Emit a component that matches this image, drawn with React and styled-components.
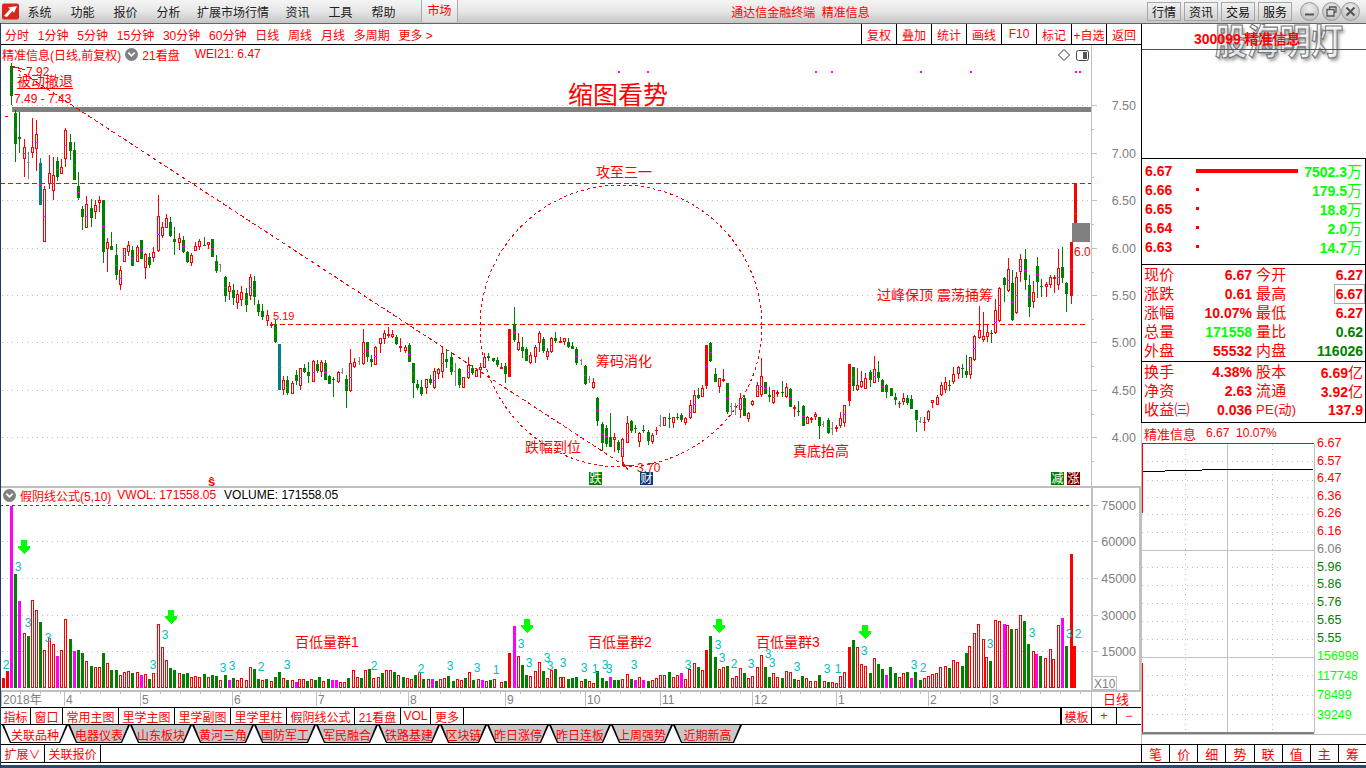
import React from 'react';
import styled, { createGlobalStyle } from 'styled-components';

const Global = createGlobalStyle`
  html, body { margin: 0; padding: 0; background: #fff; overflow: hidden; }
  * { box-sizing: border-box; }
`;
const FONT = `"Liberation Sans", "Noto Sans CJK SC", sans-serif`;
const RED = '#ff0000', GREEN = '#008000', LIME = '#00ff00', GRAY = '#808080', LINE = '#c0c0c0', MAG = '#ff00ff', TEAL = '#00c0c0';

/* ---------- data ---------- */
// scale, x0, y0, rows [u, bodyTop, bodyBottom, high, low, kind]
const SEGMENTS = [
  [1, 0, 0, [[11.5, 66, 96, 63, 105, 'g']]],
  [3, 0, 130, [
    [46,-51,41,-60,95,'g'],[58,22,27,-54,69,'g'],[73,52,86,27,140,'r'],[85,96,98,65,147,'y'],[97,52,68,-36,85,'r'],[109,12,58,-30,122,'r'],
    [121,100,225,85,225,'t'],[133,178,335,168,335,'r'],[148,130,163,75,177,'r'],[160,135,182,80,210,'r'],[172,94,140,82,152,'g'],[184,112,131,88,131,'r'],
    [196,0,86,-6,110,'r'],[211,36,62,12,90,'g'],[223,60,150,36,150,'g'],[235,168,204,126,210,'g'],[247,237,261,228,300,'g'],[259,222,293,198,293,'r'],
    [274,234,264,207,290,'g'],[286,226,245,210,268,'r'],[298,210,218,198,245,'r'],[310,210,366,210,398,'g'],[322,336,356,324,425,'r'],[334,348,360,306,360,'g'],
    [349,375,435,342,450,'g'],[361,420,465,408,480,'r'],[373,354,395,354,395,'r'],[385,346,365,332,378,'r'],[397,360,407,348,407,'g'],[412,351,395,346,395,'r'],
    [424,330,387,330,387,'g'],[436,372,413,370,447,'r'],[448,380,405,370,415,'g'],[460,366,383,352,395,'r'],[475,259,362,195,365,'r'],[487,291,318,277,325,'r'],
    [499,264,293,252,295,'r'],[511,276,318,261,322,'g'],[523,328,335,290,375,'g'],[538,324,339,308,360,'r'],[550,330,365,318,368,'g'],[562,366,396,362,400,'g'],
    [574,375,398,370,408,'r'],[586,348,362,337,362,'r'],[598,333,351,328,360,'r'],[613,345,347,322,347,'g'],[625,337,346,335,358,'r'],[637,327,380,327,380,'g'],
    [649,393,423,376,428,'g'],[661,403,405,402,425,'y'],
  ]],
  [1, 0, 0, [
    [225,277,296,276,302,'g'],[229,286,292,282,300,'r'],[233,290,298,284,305,'g'],[237,294,303,290,309,'r'],[241,292,300,286,306,'r'],[246,293,305,288,312,'g'],
    [250,277,296,274,300,'r'],[254,281,297,276,305,'g'],[258,304,312,300,316,'g'],[262,311,317,304,320,'g'],[267,315,321,310,326,'r'],
  ]],
  [3, 270, 320, [
    [4,11,14,5,25,'r'],[16,12,65,0,70,'g'],[28,72,210,72,210,'t'],[40,180,210,168,225,'r'],[52,180,218,168,225,'g'],[67,190,222,184,222,'r'],[79,165,183,150,195,'g'],
    [91,145,198,145,210,'r'],[103,145,155,132,160,'g'],[115,157,168,125,190,'g'],[130,123,185,120,185,'r'],[142,132,152,120,160,'g'],[154,125,156,120,170,'r'],
    [166,129,180,120,180,'g'],[178,168,192,165,192,'g'],[190,178,181,170,230,'g'],[205,156,186,152,190,'r'],[217,156,158,145,163,'y'],[229,178,212,165,263,'g'],
    [241,130,214,88,215,'r'],[253,127,140,115,143,'r'],[268,124,126,112,136,'y'],[280,67,133,28,135,'r'],[292,67,112,65,125,'g'],[304,118,126,105,140,'g'],
    [316,80,136,78,136,'r'],[331,55,73,55,100,'r'],[343,40,58,30,72,'r'],[355,42,48,22,55,'r'],[367,42,52,30,55,'r'],[379,52,72,45,75,'g'],[391,77,82,55,95,'r'],
    [406,82,93,75,100,'r'],[418,75,125,70,125,'g'],[430,130,188,128,233,'g'],[442,193,203,180,210,'g'],[454,200,222,180,228,'g'],[469,178,205,176,222,'r'],
    [481,178,190,165,195,'g'],[493,154,205,143,207,'r'],[505,148,163,145,178,'r'],[517,100,157,85,175,'r'],[529,117,125,88,145,'g'],[544,110,155,95,165,'g'],
    [556,154,156,130,197,'y'],[568,148,195,145,205,'g'],[580,172,205,172,205,'r'],[595,135,175,112,177,'r'],[607,145,158,135,165,'g'],[619,150,172,145,172,'r'],
    [631,142,150,128,175,'r'],[643,112,145,100,145,'r'],[655,109,113,100,122,'g'],[670,115,123,113,125,'g'],[682,120,135,112,140,'g'],[694,140,146,130,148,'r'],
    [706,138,162,130,190,'g'],[718,28,170,28,170,'s'],
  ]],
  [3, 480, 300, [
    [103,73,120,22,125,'g'],[115,127,150,100,153,'r'],[127,140,152,112,175,'g'],[139,147,182,142,184,'g'],[151,165,190,155,192,'r'],[165,140,172,135,190,'r'],
    [178,99,130,93,155,'r'],[190,117,152,110,160,'g'],[202,152,170,145,180,'r'],[214,114,155,112,160,'r'],[226,113,123,96,128,'g'],[241,123,128,112,128,'s'],
    [253,115,125,115,135,'r'],[265,125,140,115,145,'g'],[277,138,146,125,148,'g'],[289,146,190,140,195,'g'],[304,179,181,176,195,'y'],[316,197,253,195,255,'g'],
    [328,237,239,228,250,'y'],[340,247,265,235,266,'r'],[352,295,363,290,378,'g'],[367,372,430,365,452,'g'],[379,385,432,375,440,'g'],[391,410,440,338,440,'g'],
    [403,410,420,400,455,'r'],[415,425,450,420,460,'g'],[427,417,470,415,498,'r'],[442,370,428,347,430,'r'],[454,363,394,360,400,'g'],[466,385,388,375,400,'g'],
    [478,400,425,395,440,'r'],[490,390,394,375,400,'g'],[505,397,423,390,435,'g'],[517,405,425,400,432,'r'],[529,390,393,380,405,'s'],[541,374,376,345,382,'y'],
    [553,352,377,350,378,'r'],[568,354,356,340,385,'g'],[580,352,370,350,385,'r'],[592,351,353,340,360,'g'],[604,345,360,338,365,'g'],[616,355,370,350,375,'r'],
    [631,315,355,300,357,'r'],[643,286,338,270,338,'r'],[655,285,295,265,297,'g'],[667,265,290,255,290,'r'],[679,135,258,135,268,'s'],[691,128,182,125,185,'g'],
    [706,222,245,205,245,'g'],[718,235,262,235,278,'r'],[730,238,243,208,245,'s'],[742,250,335,250,342,'g'],[754,319,321,310,345,'y'],[766,319,321,310,345,'y'],
  ]],
  [3, 740, 240, [
    [0,475,510,458,535,'r'],[13,475,527,465,527,'g'],[25,518,537,515,545,'r'],[37,484,494,480,497,'r'],[52,436,472,425,472,'r'],[64,408,465,354,470,'r'],[76,426,462,425,463,'g'],
    [88,466,470,442,486,'g'],[100,451,490,451,492,'r'],[112,455,461,450,470,'r'],[127,456,458,423,470,'g'],[139,440,470,428,473,'r'],[151,447,500,445,500,'g'],
    [163,502,508,495,530,'r'],[175,512,514,483,527,'g'],[190,498,557,495,558,'g'],[202,530,551,528,553,'r'],[214,534,536,530,548,'r'],[226,523,530,517,540,'r'],
    [238,532,557,530,598,'g'],[250,552,554,543,562,'y'],[265,541,580,533,582,'g'],[277,564,566,545,585,'y'],[289,562,566,555,575,'r'],[301,535,557,515,565,'r'],
    [313,496,548,494,560,'r'],[328,373,484,373,497,'s'],[340,381,437,381,452,'g'],[352,436,450,385,452,'r'],[364,424,441,393,445,'r'],[376,415,447,400,447,'r'],
    [391,395,420,390,440,'g'],[403,388,428,348,430,'r'],[415,396,414,363,425,'g'],[427,420,456,418,456,'g'],[439,435,456,433,473,'g'],[454,445,467,445,467,'g'],
    [466,471,480,460,495,'g'],[478,490,493,483,503,'s'],[490,475,487,460,495,'r'],[502,475,489,465,495,'g'],[514,477,506,465,506,'g'],[529,511,540,510,575,'g'],
    [541,544,546,530,548,'y'],[553,546,549,530,573,'s'],[565,512,540,510,545,'r'],[577,481,490,480,505,'r'],[592,470,494,465,495,'r'],[604,436,465,425,468,'r'],
    [616,425,450,410,458,'r'],[628,435,438,420,452,'g'],[640,403,425,382,432,'r'],[655,380,403,378,418,'r'],[667,383,385,372,415,'g'],[679,393,404,346,415,'g'],
    [691,352,405,350,416,'r'],[703,287,361,285,362,'r'],[718,270,293,198,298,'r'],[730,289,299,217,305,'r'],[742,277,291,255,305,'r'],[754,280,283,270,308,'g'],
    [766,210,280,178,283,'r'],[778,144,242,142,245,'r'],[793,113,134,112,185,'g'],[805,88,154,55,155,'r'],[817,128,240,90,243,'g'],[829,112,220,97,222,'r'],
    [841,57,95,42,125,'r'],[856,57,119,27,150,'g'],[868,135,200,105,230,'g'],[880,157,186,123,205,'r'],[892,78,125,50,175,'g'],[904,137,139,118,170,'g'],
    [919,133,142,125,170,'r'],[931,112,134,105,143,'r'],[943,112,118,105,160,'r'],[955,85,135,28,150,'r'],[967,82,113,22,128,'g'],[979,128,162,125,215,'g'],
    [994,6,167,6,192,'s'],[1007,-171,6,-171,6,'s'],
  ]],
];
const CANDLES = SEGMENTS.flatMap(([s, x0, y0, rows]) =>
  rows.map(([u, t, b, h, l, k]) => ({
    x: Math.round(x0 + u / s - 1.5), t: Math.round(y0 + t / s), b: Math.round(y0 + b / s),
    h: Math.round(y0 + h / s), l: Math.round(y0 + l / s), k,
  })));

const VOL_A = [[10,594,'s'],[22,573,'s'],[34,78,'m'],[46,282,'g'],[58,363,'m'],[73,460,'r'],[85,468,'g'],[97,360,'r'],[109,390,'r'],[121,426,'g'],[133,510,'r'],[148,475,'r'],[160,492,'r'],[172,528,'m'],[184,510,'r'],[196,417,'r'],[211,477,'g'],[223,513,'m'],[235,510,'g'],[247,519,'g'],[259,543,'r'],[274,558,'g'],[286,561,'r'],[298,561,'r'],[310,519,'g'],[322,549,'r'],[334,570,'g'],[349,570,'g'],[361,585,'r'],[373,576,'r'],[385,573,'r'],[397,579,'g'],[412,576,'r'],[424,585,'m'],[436,582,'r'],[448,597,'g'],[460,579,'r'],[475,432,'r'],[487,501,'r'],[499,540,'r'],[511,564,'g'],[523,570,'g'],[538,579,'r'],[550,582,'g'],[562,579,'g'],[574,591,'r'],[586,588,'r'],[598,591,'r'],[613,582,'g'],[625,591,'r'],[637,585,'g'],[649,588,'g'],[661,600,'r'],[676,585,'g'],[688,600,'m'],[700,594,'g'],[712,600,'r'],[724,594,'r'],[739,600,'r'],[751,561,'r'],[763,567,'g'],[775,597,'g'],[787,600,'r'],[799,597,'g'],[814,603,'r'],[826,591,'g'],[838,576,'g'],[850,594,'r'],[862,600,'g'],[877,600,'r'],[889,606,'m'],[898,597,'r']];
const VOL_B = [[9,'r'],[7,'g'],[9,'r'],[8,'g'],[11,'g'],[7,'r'],[9,'g'],[8,'m'],[8,'m'],[6,'r'],[6,'r'],[10,'g'],[18,'r'],[11,'r'],[10,'g'],[18,'r'],[19,'g'],[10,'r'],[11,'r'],[15,'g'],[18,'r'],[18,'r'],[16,'g'],[13,'r'],[11,'g'],[10,'r'],[9,'r'],[13,'g'],[16,'r'],[9,'g'],[9,'r'],[9,'m'],[7,'g'],[9,'r'],[10,'r'],[12,'g'],[7,'g'],[9,'r'],[8,'r'],[10,'g'],[16,'r'],[8,'g'],[9,'r'],[8,'m'],[7,'r'],[8,'g'],[9,'r']];
const VOL_C = [[4,245,'r'],[14,242,'g'],[25,158,'s'],[39,78,'m'],[49,168,'r'],[60,195,'g'],[70,225,'g'],[81,228,'r'],[94,213,'r'],[105,186,'r'],[116,212,'g'],[126,234,'r'],[137,210,'r'],[148,207,'g'],[160,232,'r'],[170,232,'r'],[182,237,'g'],[193,234,'g'],[204,231,'g'],[217,243,'r'],[227,237,'g'],[238,243,'r'],[249,248,'r'],[260,213,'g'],[272,234,'g'],[283,243,'g'],[294,231,'m'],[305,240,'g'],[316,240,'g'],[326,237,'r'],[339,222,'r'],[349,237,'g'],[360,240,'m'],[371,232,'r'],[381,240,'m'],[394,243,'g'],[405,240,'r'],[416,234,'r'],[427,225,'r'],[438,225,'r'],[450,216,'g'],[461,231,'r'],[472,225,'r'],[482,219,'m'],[493,237,'r'],[505,207,'r'],[517,189,'r'],[528,201,'g'],[538,210,'r'],[550,150,'s'],[560,108,'g'],[573,171,'g'],[583,207,'r'],[594,201,'r'],[605,198,'g'],[618,234,'r'],[629,228,'r'],[640,204,'r'],[650,219,'g'],[660,234,'r'],[671,228,'r'],[684,201,'r'],[695,165,'r'],[706,201,'g'],[716,231,'g'],[727,219,'r'],[739,231,'r'],[751,234,'g'],[761,214,'r'],[772,216,'r'],[783,237,'g'],[794,240,'r'],[805,228,'g'],[816,234,'r'],[827,243,'r'],[838,243,'r'],[849,225,'g'],[862,243,'r'],[873,246,'g'],[884,246,'r'],[895,249,'r'],[905,228,'r'],[916,216,'r'],[929,141,'s'],[939,120,'g'],[950,141,'r'],[961,192,'r'],[972,198,'r'],[985,219,'g'],[995,174,'r'],[1006,192,'g'],[1017,207,'g'],[1027,225,'m'],[1040,201,'g'],[1051,219,'g'],[1062,231,'r'],[1073,219,'r'],[1083,216,'g'],[1094,234,'m'],[1106,216,'g'],[1118,240,'g'],[1128,234,'r'],[1139,228,'r'],[1150,222,'r'],[1162,219,'r'],[1173,201,'r'],[1184,198,'r'],[1195,204,'g'],[1205,180,'r'],[1218,186,'r'],[1229,198,'g'],[1240,159,'g'],[1250,138,'r'],[1261,99,'r'],[1274,72,'r'],[1285,117,'r'],[1295,171,'r'],[1306,183,'g'],[1317,60,'r'],[1328,63,'r'],[1341,72,'m'],[1351,75,'r'],[1361,87,'g'],[1373,87,'r'],[1384,45,'r'],[1396,63,'g'],[1407,132,'g'],[1418,153,'r'],[1428,162,'m'],[1439,168,'g'],[1452,174,'r'],[1463,147,'r'],[1473,177,'r'],[1485,75,'r'],[1495,54,'m'],[1506,138,'g'],[1519,-138,'s'],[1529,138,'s']];
const VOLUMES = [
  ...VOL_A.map(([u, v, k]) => ({ x: u / 3, y: 480 + v / 3, k })),
  ...VOL_B.map(([h, k], i) => ({ x: 303 + i * 4.17, y: 688 - h, k })),
  ...VOL_C.map(([u, v, k]) => ({ x: 500 + u / 2.66, y: 600 + v / 3, k })),
].map(b => ({ x: Math.round(b.x - 1.5), y: Math.round(b.y), k: b.k }));

const VOL_NUMS = [['2',6,664],['3',18,566],['3',28,622],['3',48,637],['3',153,664],['3',165,634],['3',223,667],['3',232,665],['2',261,666],['3',287,664],['2',374,665],['2',421,668],['3',450,665],['3',477,667],['1',496,669],['3',521,643],['3',529,662],['3',547,657],['3',550,665],['3',563,662],['3',584,667],['1',595,668],['3',605,664],['3',609,668],['3',634,664],['3',688,664],['3',718,644],['3',722,657],['2',734,663],['3',751,663],['3',768,653],['3',772,662],['3',797,666],['3',827,668],['1',838,668],['3',864,650],['3',914,664],['2',923,667],['3',990,643],['3',1032,632],['3',1069,633],['2',1078,633]];
const ARROWS = [[24,540],[171,610],[527,619],[719,619],[865,625]];
const NOTES = [['缩图看势',568,104,25],['攻至三一',596,177,14],['筹码消化',596,366,14],['跌幅到位',525,452,14],['真底抬高',793,456,14],['过峰保顶 震荡捅筹',877,300,14],['被动撤退',17,86,14],['百低量群1',295,647,14],['百低量群2',588,647,14],['百低量群3',756,647,14],['7.92',26,76,12],['7.49 - 7.43',14,103,12],['5.19',273,320,11],['3.70',637,472,12],['6.0',1074,256,12]];
const PRICE_TICKS = [['7.50',105],['7.00',153],['6.50',200],['6.00',248],['5.50',295],['5.00',342],['4.50',390],['4.00',437]];
const VOL_TICKS = [['75000',505],['60000',541],['45000',578],['30000',615],['15000',651]];
const MONTHS = [['2018年',1,3],['4',64,66],['5',140,142],['6',232,234],['7',316,318],['8',408,410],['9',505,507],['10',585,587],['11',660,662],['12',752,754],['1',836,838],['2',928,930],['3',990,992]];
const DOTS = [618,647,815,831,920,970,1075,1079];
const BADGES = [['跌',589,GREEN],['财',640,'#0a3a6e'],['减',1051,GREEN],['涨',1067,'#7a0000']];

const MINI_PRICES = [['6.67',443,RED],['6.57',461,RED],['6.47',478,RED],['6.36',496,RED],['6.26',513,RED],['6.16',531,RED],['6.06',549,GRAY],['5.96',567,GREEN],['5.86',584,GREEN],['5.76',602,GREEN],['5.65',620,GREEN],['5.55',638,GREEN],['156998',656,LIME],['117748',676,LIME],['78499',695,LIME],['39249',715,LIME]];
const MINI_DOTS = [461,480,497,514,532,567,585,603,621,639,675,695,714];

/* ---------- styled parts ---------- */
const Screen = styled.div`
  position: relative; width: 1366px; height: 768px; background: #fff; overflow: hidden;
  font-family: ${FONT}; color: ${RED}; font-size: 12px; display: flex; flex-direction: column;
  &::before { content: ''; position: absolute; left: 0; top: 23px; bottom: 0; width: 1px; background: #1d3c5e; z-index: 5; }
`;
const TopBar = styled.header`
  height: 24px; flex: none; display: flex; align-items: center; padding: 0 6px 1px 2px;
  background: linear-gradient(#f4f4f4, #e8e8e8 45%, #c6c6c6); border-bottom: 1px solid #666;
`;
const Logo = styled.svg`width: 17px; height: 17px; margin-right: -1px; flex: none;`;
const MenuItem = styled.span`
  color: #222; font-size: 12px; padding: 0 ${p => p.$pad}px; white-space: nowrap; letter-spacing: 0;
`;
const MarketTab = styled.span`
  margin-left: 16px; width: 37px; height: 22px; line-height: 22px; text-align: center; color: ${RED};
  background: linear-gradient(#fafafa, #dcdcdc); border-left: 1px solid #aaa; border-right: 1px solid #aaa;
`;
const AppTitle = styled.span`margin-left: 273px; white-space: pre; font-size: 12px;`;
const TopRight = styled.div`margin-left: auto; display: flex; align-items: center; gap: 3px;`;
const TopButton = styled.button`
  width: 34px; height: 19px; padding: 0; font: 12px ${FONT}; color: #111; border: 1px solid #a8a8a8; border-radius: 0;
  background: linear-gradient(#f2f2f2, #d0d0d0);
`;
const WinButton = styled.span`
  width: 19px; height: 19px; border-radius: 50%; border: 1px solid #999; margin-left: ${p => p.$gap}px;
  background: radial-gradient(circle at 50% 30%, #eee, #b6b6b6); display: flex; align-items: center; justify-content: center;
  svg { width: 11px; height: 11px; }
`;

const Body = styled.div`flex: none; height: 739px; display: flex;`;
const LeftColumn = styled.main`width: 1141px; flex: none; display: flex; flex-direction: column;`;
const ToolBar = styled.nav`
  height: 21px; flex: none; display: flex; align-items: center; border-bottom: 1px solid #000; padding-left: 5px;
`;
const PeriodItem = styled.span`margin-right: 8.8px; white-space: nowrap; font-size: 12px;`;
const ToolRight = styled.div`margin-left: auto; display: flex; height: 100%;`;
const ToolButton = styled.span`
  width: 35px; display: flex; align-items: center; justify-content: center; border-left: 1px solid #000; white-space: nowrap; font-size: 12px;
`;
const ChartArea = styled.section`position: relative; height: 662px; flex: none;`;
const ChartSvg = styled.svg`display: block;`;
const Legend = styled.div`
  position: absolute; left: 2px; top: ${p => p.$top}px; height: 16px; display: flex; align-items: center; white-space: nowrap; font-size: 12px;
`;
const LegendIcon = styled.span`
  width: 13px; height: 13px; border-radius: 50%; background: ${GRAY}; margin: 0 ${p => p.$right}px 0 ${p => p.$left}px;
  display: flex; align-items: center; justify-content: center; svg { width: 9px; height: 9px; }
`;
const LegendText = styled.span`margin-left: ${p => p.$left || 0}px; color: ${p => p.$color || RED};`;
const CornerIcons = styled.div`position: absolute; right: 52px; top: 3px; display: flex; gap: 5px; align-items: center;`;

const Label = styled.text`font-family: ${FONT}; font-size: ${p => p.$size || 12}px; fill: ${p => p.$fill || RED};`;

const ButtonRow = styled.div`
  height: ${p => p.$h}px; flex: none; display: flex; border-top: 1px solid #000; border-bottom: 1px solid #000; padding-left: 1px;
`;
const RowButton = styled.span`
  width: ${p => p.$w}px; display: flex; align-items: center; justify-content: center; border-right: 1px solid #000; white-space: nowrap; font-size: 12px;
`;
const RowEnd = styled.div`margin-left: auto; display: flex;`;
const EndButton = styled.span`
  width: ${p => p.$w}px; display: flex; align-items: center; justify-content: center; border-left: ${p => p.$thick ? 2 : 1}px solid #000; font-size: 12px;
`;
const TabStrip = styled.div`height: 19px; flex: none; display: flex; padding-left: 2px;`;
const Tab = styled.span`
  width: ${p => p.$w}px; height: 18px; background: #000; padding: 0;
  clip-path: polygon(0 0, 100% 0, calc(100% - 8px) 100%, 8px 100%);
  flex: none;
  & > span {
    display: flex; width: 100%; height: 100%; align-items: center; justify-content: center; font-size: 12px;
    background: ${p => p.$active ? '#fff' : '#c8c8c8'};
    clip-path: polygon(2px 0, calc(100% - 2px) 0, calc(100% - 9px) calc(100% - 1px), 9px calc(100% - 1px));
  }
`;

const RightColumn = styled.aside`width: 225px; flex: none; display: flex; flex-direction: column; position: relative;`;
const StockHead = styled.div`
  position: relative; z-index: 4;
  height: 26px; flex: none; border-bottom: 1px solid #e8005a; border-left: 1px solid #000; padding: 4px 0 0 52px;
  font-size: 14px; font-weight: 700; white-space: nowrap;
`;
const Watermark = styled.div`
  position: absolute; left: 74px; top: -10px; font: 700 32px "Noto Sans CJK SC", sans-serif; color: rgba(255,255,255,.6);
  -webkit-text-stroke: 1px #777; text-shadow: 2px 2px 3px rgba(90,90,90,.55); white-space: nowrap; line-height: 46px; z-index: 3;
  transform: scaleY(1.12); transform-origin: top;
`;
const Blank = styled.div`height: 109px; flex: none; border-left: 1px solid #000; border-bottom: 1px solid #000;`;
const Box = styled.section`
  height: ${p => p.$h}px; flex: none; border-left: 1px solid #000; border-right: 1px solid #000; border-bottom: 1px solid #000; padding: ${p => p.$pad}px 0 0 2px;
`;
const OrderRow = styled.div`display: flex; height: 19px; align-items: center; font-weight: 700; font-size: 14px;`;
const OrderPrice = styled.span`width: 52px; flex: none; padding-left: 1px;`;
const OrderBarCell = styled.span`width: 103px; flex: none; display: flex; align-items: center;`;
const OrderBar = styled.i`display: block; height: ${p => p.$long ? 4 : 3}px; background: ${RED};`;
const OrderVolume = styled.span`width: 63px; text-align: right; color: ${LIME}; white-space: nowrap; b { font-weight: 400; font-size: 15px; font-family: "Noto Sans CJK SC", sans-serif; }`;
const QuoteGrid = styled.div`display: grid; grid-template-columns: 40px 68px 45px 66px; grid-auto-rows: 19px; align-items: center;`;
const QuoteLabel = styled.span`font-size: ${p => p.$size || 15}px; white-space: nowrap; line-height: 19px; letter-spacing: .3px; padding-left: ${p => p.$pl || 0}px;`;
const QuoteValue = styled.span`
  font-weight: 700; font-size: 14px; justify-self: end; white-space: nowrap; color: ${p => p.$color || RED};
  ${p => p.$boxed ? 'outline: 1px solid #aaa; outline-offset: 1px;' : ''}
  b { font: 400 15px "Noto Sans CJK SC", sans-serif; }
`;
const MiniTitle = styled.div`
  height: 20px; flex: none; display: flex; align-items: center; padding-left: 2px; border-left: 1px solid ${LINE}; white-space: pre; font-size: 12px;
`;
const MiniName = styled.span`font-size: 13px; margin-right: 10px;`;
const MiniChart = styled.svg`display: block; flex: none; overflow: visible;`;
const MiniGap = styled.div`height: 9px; flex: none; border-left: 1px solid ${LINE};`;
const SideRow = styled.div`height: 19px; flex: none; display: flex; border-top: 1px solid #000; border-bottom: 1px solid #000; border-left: 1px solid #000;`;
const SideButton = styled.span`flex: 1; display: flex; align-items: center; justify-content: center; border-right: 1px solid #000; font-size: 13px; &:last-child { border-right: 0; }`;
const FrameBottom = styled.footer`height: 3px; margin-top: 2px; flex: none; background: #2b4a6b;`;

/* ---------- chart pieces ---------- */
function Candle({ c }) {
  const wick = c.k === 'g' ? GREEN : c.k === 't' ? '#008080' : c.k === 'y' ? GRAY : RED;
  const h = Math.max(c.b - c.t, 1);
  if (c.k === 'y') {
    return <g><rect x={c.x + 1} y={c.h} width={1} height={c.l - c.h} fill={wick} /><rect x={c.x} y={c.t} width={1} height={1} fill={wick} /></g>;
  }
  return (
    <g>
      <rect x={c.x + 1} y={c.h} width={1} height={Math.max(c.l - c.h, 1)} fill={wick} />
      {c.k === 'r'
        ? <rect x={c.x + 0.5} y={c.t + 0.5} width={2} height={Math.max(h - 1, 1)} fill="#fff" stroke={RED} />
        : <rect x={c.x} y={c.t} width={3} height={h} fill={c.k === 'g' ? GREEN : c.k === 't' ? '#008080' : RED} />}
      {h >= 12 && <rect x={c.x} y={Math.round((c.t + c.b) / 2)} width={3} height={1} fill={MAG} />}
    </g>
  );
}
function VolumeBar({ b }) {
  const h = 688 - b.y;
  if (b.k === 'r') return <rect x={b.x + 0.5} y={b.y + 0.5} width={2} height={h - 1} fill="#fff" stroke={RED} />;
  return <rect x={b.x} y={b.y} width={3} height={h} fill={b.k === 'g' ? GREEN : b.k === 'm' ? MAG : RED} />;
}
const Chevron = () => <svg viewBox="0 0 10 10"><path d="M1.5 3 5 6.5 8.5 3" fill="none" stroke="#fff" strokeWidth="2" /></svg>;

function MainChart() {
  const grid = (y, key) => <line key={key} x1="2" x2="1091" y1={y} y2={y} stroke={LINE} strokeDasharray="1 4" />;
  return (
    <ChartSvg width="1141" height="662" viewBox="0 45 1141 662" shapeRendering="crispEdges">
      {PRICE_TICKS.map(([, y]) => grid(y + 0.5, y))}
      <rect x="12" y="107" width="1079" height="5" fill={GRAY} />
      <line x1="0" x2="1091" y1="183.5" y2="183.5" stroke={RED} strokeDasharray="5 3" />
      <line x1="272" x2="1088" y1="324.5" y2="324.5" stroke={RED} strokeDasharray="5 3" />
      <line x1="12" y1="66" x2="625" y2="466" stroke={RED} strokeDasharray="4 3" />
      <circle cx="621" cy="326" r="141" fill="none" stroke={RED} strokeDasharray="3 3" />
      <path d="M12 66 25 70M625 465H634M622 461 628 470" stroke={RED} fill="none" />
      <rect x="5" y="116" width="3" height="1" fill={RED} />
      {CANDLES.map((c, i) => <Candle key={i} c={c} />)}
      <rect x="1072" y="223" width="18" height="19" fill={GRAY} />
      <line x1="17" x2="73" y1="88.5" y2="88.5" stroke={RED} />
      {DOTS.map(x => <rect key={x} x={x} y="71" width="2" height="2" fill={MAG} />)}
      {NOTES.map(([t, x, y, s]) => <Label key={t} x={x} y={y} $size={s}>{t}</Label>)}
      <Label x="208" y="486" $size={13} style={{ fontWeight: 700 }}>ŝ</Label>
      {BADGES.map(([t, x, c]) => (
        <g key={t}>
          <rect x={x} y="472" width="13" height="13" fill={c} />
          <Label x={x + 0.5} y="483" $size={12} $fill="#fff">{t}</Label>
        </g>
      ))}
      {/* price axis */}
      <line x1="1091.5" x2="1091.5" y1="45" y2="487" stroke={LINE} />
      {PRICE_TICKS.map(([t, y]) => (
        <g key={t}>
          <line x1="1091" x2="1097" y1={y + 0.5} y2={y + 0.5} stroke={LINE} />
          <line x1="1091" x2="1094" y1={y + 24.5} y2={y + 24.5} stroke={LINE} />
          <Label x="1136" y={y + 5} $size={12.5} $fill={GRAY} textAnchor="end">{t}</Label>
        </g>
      ))}
      {/* volume panel */}
      <rect x="0" y="486" width="1141" height="2" fill={LINE} />
      <line x1="0" x2="1091" y1="505.5" y2="505.5" stroke={RED} strokeDasharray="3 3" />
      {VOL_TICKS.slice(1).map(([, y]) => grid(y + 0.5, y))}
      {VOLUMES.map((b, i) => <VolumeBar key={i} b={b} />)}
      {ARROWS.map(([x, y]) => (
        <polygon key={x} fill={LIME} points={`${x - 3},${y} ${x + 3},${y} ${x + 3},${y + 6} ${x + 6},${y + 6} ${x + 6},${y + 8} ${x},${y + 14} ${x - 6},${y + 8} ${x - 6},${y + 6} ${x - 3},${y + 6}`} />
      ))}
      {VOL_NUMS.map(([t, x, y], i) => <Label key={i} x={x} y={y + 5} $size={12} $fill={TEAL} textAnchor="middle">{t}</Label>)}
      <rect x="1091" y="487" width="2" height="204" fill={LINE} />
      <rect x="1139" y="487" width="2" height="204" fill={LINE} />
      {VOL_TICKS.map(([t, y]) => (
        <g key={t}>
          <line x1="1092" x2="1098" y1={y + 0.5} y2={y + 0.5} stroke={LINE} />
          <Label x="1136" y={y + 5} $size={12.5} $fill={GRAY} textAnchor="end">{t}</Label>
        </g>
      ))}
      <rect x="1092.5" y="676.5" width="24" height="13" fill="#fff" stroke={LINE} />
      <Label x="1094" y="688" $size={12} $fill={GRAY}>X10</Label>
      {/* time axis */}
      <rect x="0" y="690" width="1141" height="2" fill={LINE} />
      <rect x="1091" y="690" width="1" height="17" fill={LINE} />
      {MONTHS.map(([t, tick, x]) => (
        <g key={t}>
          <line x1={tick + 0.5} x2={tick + 0.5} y1="691" y2="706" stroke={LINE} />
          <Label x={x} y="704" $size={12} $fill={GRAY}>{t}</Label>
        </g>
      ))}
      {Array.from({ length: 54 }, (_, i) => (
        <line key={i} x1={20 + i * 20} x2={20 + i * 20} y1="691" y2="694" stroke={LINE} />
      ))}
      <Label x="1103" y="704" $size={13}>日线</Label>
    </ChartSvg>
  );
}

function MiniPriceChart() {
  const V = [1185.5, 1272.5];
  return (
    <MiniChart width="225" height="292" viewBox="1141 443 225 292" shapeRendering="crispEdges">
      <line x1="1141.5" x2="1141.5" y1="443" y2="735" stroke={LINE} />
      {MINI_DOTS.map(y => <line key={y} x1="1142" x2="1314" y1={y + 0.5} y2={y + 0.5} stroke={LINE} strokeDasharray="1 4" />)}
      {V.map(x => <line key={x} x1={x} x2={x} y1="444" y2="733" stroke={LINE} strokeDasharray="1 4" />)}
      <line x1="1227.5" x2="1227.5" y1="444" y2="733" stroke={LINE} />
      <line x1="1142" x2="1314" y1="550.5" y2="550.5" stroke={LINE} />
      <line x1="1142" x2="1314" y1="657.5" y2="657.5" stroke={LINE} />
      <line x1="1314.5" x2="1314.5" y1="444" y2="733" stroke={LINE} />
      <line x1="1142" x2="1314" y1="443.5" y2="443.5" stroke={RED} />
      <line x1="1142.5" x2="1142.5" y1="443" y2="513" stroke={RED} />
      <line x1="1142.5" x2="1142.5" y1="663" y2="733" stroke={RED} />
      <polyline fill="none" stroke="#000" points="1143,472 1145,471 1165,471 1166,470 1202,470 1203,469 1313,469" />
      <rect x="1142" y="732" width="172" height="2" fill={GRAY} />
      {MINI_PRICES.map(([t, y, c]) => <Label key={t} x="1317" y={y + 4} $size={12.5} $fill={c}>{t}</Label>)}
      <line x1="1141" x2="1366" y1="734.5" y2="734.5" stroke={LINE} />
    </MiniChart>
  );
}

/* ---------- page ---------- */
const MENU = ['系统','功能','报价','分析','扩展市场行情','资讯','工具','帮助'];
const PERIODS = ['分时','1分钟','5分钟','15分钟','30分钟','60分钟','日线','周线','月线','多周期','更多 >'];
const TOOLS = ['复权','叠加','统计','画线','F10','标记','+自选','返回'];
const ROW1 = [['指标',30],['窗口',32],['常用主图',56],['里学主图',56],['里学副图',56],['里学里柱',56],['假阴线公式',68],['21看盘',46],['VOL',30],['更多',33]];
const TABS = [['关联品种',66],['电器仪表',62],['山东板块',62],['黄河三角',62],['国防军工',62],['军民融合',62],['铁路基建',62],['区块链',47],['昨日涨停',62],['昨日连板',62],['上周强势',62],['近期新高',69]];
const ORDERS = [['6.67',102,'7502.3'],['6.66',3,'179.5'],['6.65',3,'18.8'],['6.64',3,'2.0'],['6.63',3,'14.7']];
const SIDE = ['笔','价','细','势','联','值','主','筹'];

export default function App() {
  return (
    <Screen>
      <Global />
      <TopBar>
        <Logo viewBox="0 0 17 17">
          <rect width="17" height="16" y="0.5" rx="2" fill="#d8261f" />
          <path d="M2 13 8 6 6 4.5 15 3 12 10 10.5 8 5 14Z" fill="#fff" />
        </Logo>
        {MENU.map(m => <MenuItem key={m} $pad={m.length > 2 ? 7 : 9.5}>{m}</MenuItem>)}
        <MarketTab>市场</MarketTab>
        <AppTitle>通达信金融终端  精准信息</AppTitle>
        <TopRight>
          {['行情','资讯','交易','服务'].map(t => <TopButton key={t}>{t}</TopButton>)}
          <WinButton $gap={5}><svg viewBox="0 0 11 11"><path d="M1 8.5h9" stroke="#555" strokeWidth="2" /></svg></WinButton>
          <WinButton $gap={0}><svg viewBox="0 0 11 11"><path d="M3.5 3V1h6.5v5H8M1 3.5h7V10H1Z" fill="none" stroke="#555" strokeWidth="1.3" /></svg></WinButton>
          <WinButton $gap={-3}><svg viewBox="0 0 11 11"><path d="M1.5 1.5l8 8M9.5 1.5l-8 8" stroke="#555" strokeWidth="2.2" /></svg></WinButton>
        </TopRight>
      </TopBar>
      <Body>
        <LeftColumn>
          <ToolBar>
            {PERIODS.map(p => <PeriodItem key={p}>{p}</PeriodItem>)}
            <ToolRight>{TOOLS.map(t => <ToolButton key={t}>{t}</ToolButton>)}</ToolRight>
          </ToolBar>
          <ChartArea>
            <MainChart />
            <Legend $top={1}>
              <LegendText>精准信息(日线,前复权)</LegendText>
              <LegendIcon $left={4} $right={4}><Chevron /></LegendIcon>
              <LegendText>21看盘</LegendText>
              <LegendText $left={15}>WEI21: 6.47</LegendText>
            </Legend>
            <CornerIcons>
              <svg width="14" height="14" viewBox="0 0 14 14"><path d="M7 1.5 12.5 7 7 12.5 1.5 7Z" fill="#fff" stroke="#333" /></svg>
              <svg width="13" height="13" viewBox="0 0 13 13"><rect x=".5" y="1.5" width="12" height="10" rx="2" fill="#fff" stroke="#444" /><rect x="7" y="3" width="4" height="7" fill="#555" /></svg>
            </CornerIcons>
            <Legend $top={442}>
              <LegendIcon $left={1} $right={4}><Chevron /></LegendIcon>
              <LegendText>假阴线公式(5,10)</LegendText>
              <LegendText $left={6}>VWOL: 171558.05</LegendText>
              <LegendText $left={8} $color="#000">VOLUME: 171558.05</LegendText>
            </Legend>
          </ChartArea>
          <ButtonRow $h={18}>
            {ROW1.map(([t, w]) => <RowButton key={t} $w={w}>{t}</RowButton>)}
            <RowEnd>
              <EndButton $w={31} $thick>模板</EndButton>
              <EndButton $w={25}>+</EndButton>
              <EndButton $w={25}>−</EndButton>
            </RowEnd>
          </ButtonRow>
          <TabStrip>
            {TABS.map(([t, w], i) => (
              <Tab key={t} $active={i === 0} $w={w}><span>{t}</span></Tab>
            ))}
          </TabStrip>
          <ButtonRow $h={19}>
            <RowButton $w={44}>扩展∨</RowButton>
            <RowButton $w={56}>关联报价</RowButton>
          </ButtonRow>
        </LeftColumn>
        <RightColumn>
          <StockHead>300099 精准信息</StockHead>
          <Watermark>股海明灯</Watermark>
          <Blank />
          <Box $h={106} $pad={2}>
            {ORDERS.map(([p, w, v]) => (
              <OrderRow key={p}>
                <OrderPrice>{p}</OrderPrice>
                <OrderBarCell><OrderBar $long={w > 3} style={{ width: w }} /></OrderBarCell>
                <OrderVolume>{v}<b>万</b></OrderVolume>
              </OrderRow>
            ))}
          </Box>
          <Box $h={97} $pad={0}>
            <QuoteGrid>
              <QuoteLabel>现价</QuoteLabel><QuoteValue>6.67</QuoteValue><QuoteLabel $pl={4}>今开</QuoteLabel><QuoteValue>6.27</QuoteValue>
              <QuoteLabel>涨跌</QuoteLabel><QuoteValue>0.61</QuoteValue><QuoteLabel $pl={4}>最高</QuoteLabel><QuoteValue $boxed>6.67</QuoteValue>
              <QuoteLabel>涨幅</QuoteLabel><QuoteValue>10.07%</QuoteValue><QuoteLabel $pl={4}>最低</QuoteLabel><QuoteValue>6.27</QuoteValue>
              <QuoteLabel>总量</QuoteLabel><QuoteValue $color={LIME}>171558</QuoteValue><QuoteLabel $pl={4}>量比</QuoteLabel><QuoteValue $color={GREEN}>0.62</QuoteValue>
              <QuoteLabel>外盘</QuoteLabel><QuoteValue>55532</QuoteValue><QuoteLabel $pl={4}>内盘</QuoteLabel><QuoteValue $color={GREEN}>116026</QuoteValue>
            </QuoteGrid>
          </Box>
          <Box $h={61} $pad={0}>
            <QuoteGrid>
              <QuoteLabel>换手</QuoteLabel><QuoteValue>4.38%</QuoteValue><QuoteLabel $pl={4}>股本</QuoteLabel><QuoteValue>6.69<b>亿</b></QuoteValue>
              <QuoteLabel>净资</QuoteLabel><QuoteValue>2.63</QuoteValue><QuoteLabel $pl={4}>流通</QuoteLabel><QuoteValue>3.92<b>亿</b></QuoteValue>
              <QuoteLabel>收益㈢</QuoteLabel><QuoteValue>0.036</QuoteValue><QuoteLabel $pl={4} $size={13}>PE(动)</QuoteLabel><QuoteValue>137.9</QuoteValue>
            </QuoteGrid>
          </Box>
          <MiniTitle><MiniName>精准信息</MiniName>6.67  10.07%</MiniTitle>
          <MiniPriceChart />
          <MiniGap />
          <SideRow>{SIDE.map(s => <SideButton key={s}>{s}</SideButton>)}</SideRow>
        </RightColumn>
      </Body>
      <FrameBottom />
    </Screen>
  );
}
